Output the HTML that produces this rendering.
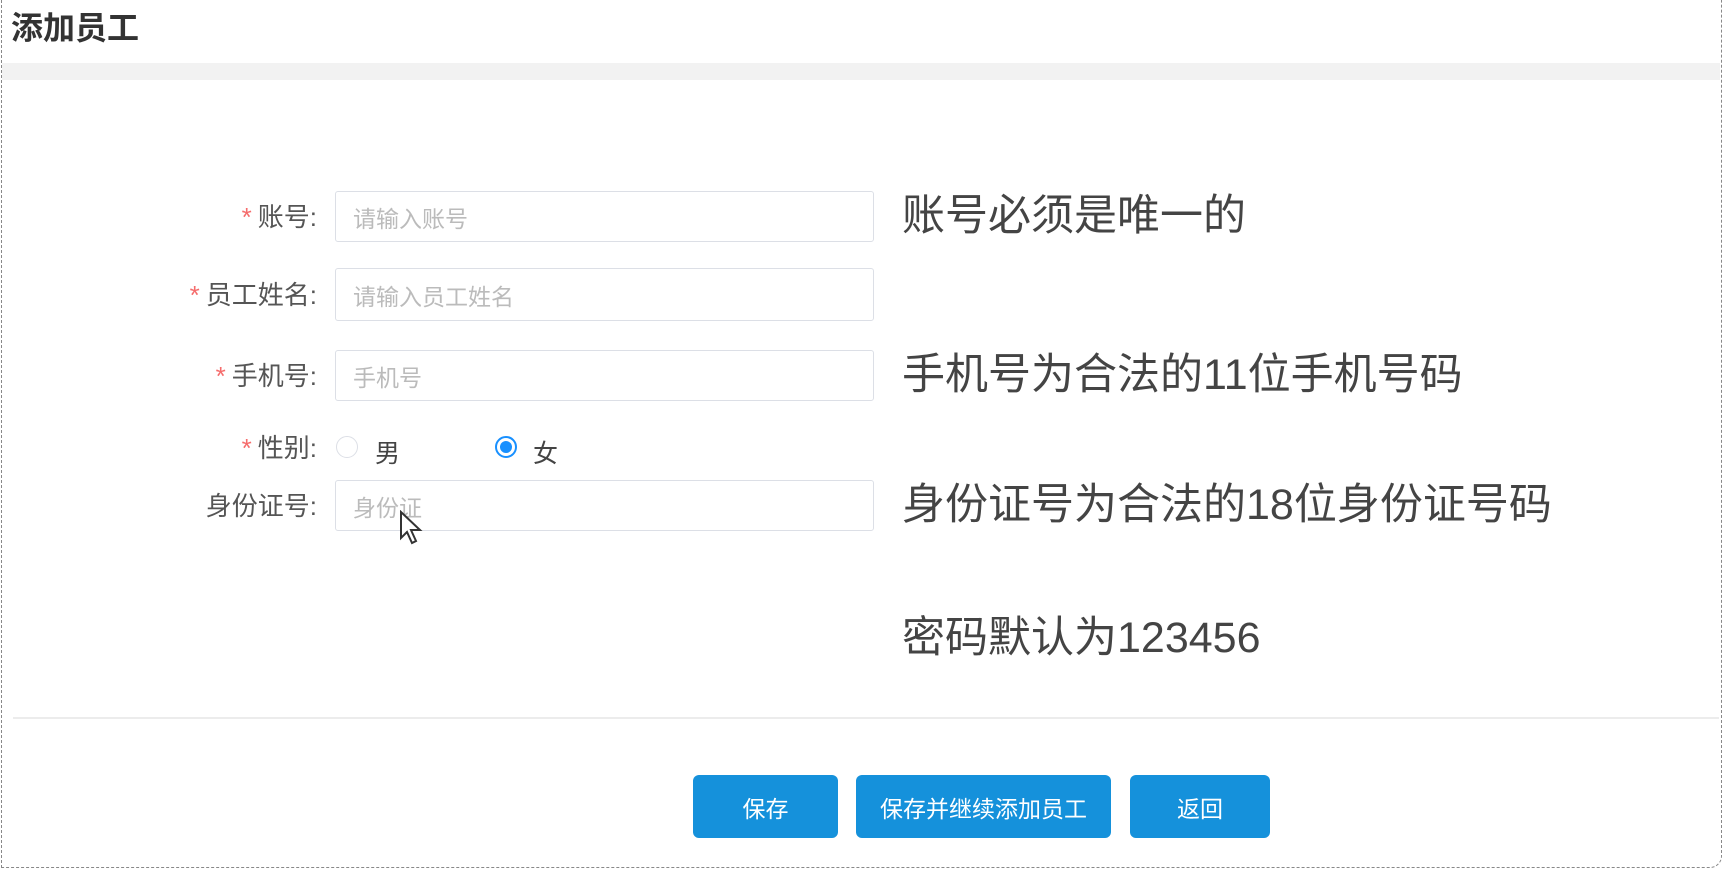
<!DOCTYPE html>
<html><head><meta charset="utf-8"><style>
*{margin:0;padding:0;box-sizing:border-box}
body{width:1724px;height:870px;background:#fff;font-family:"Liberation Sans","Noto Sans CJK SC",sans-serif;position:relative;overflow:hidden}
.frame{position:absolute;left:1px;top:0;width:1721px;height:868px;border:1px dashed #888;border-top:none;border-radius:0 0 12px 0}
.title{position:absolute;left:11px;top:3px;font-size:32px;font-weight:bold;color:#333}
.band{position:absolute;left:2px;right:4px;top:63px;height:17px;background:#f2f2f2}
.lbl{position:absolute;right:1407px;font-size:26px;color:#555;white-space:nowrap;line-height:28px}
.lbl b{color:#f56c6c;font-weight:normal;margin-right:6px}
.inp{position:absolute;left:335px;width:539px;border:1px solid #dcdfe6;border-radius:3px;font-size:23px;color:#bbb;padding-left:17px;display:flex;align-items:center}
.note{position:absolute;left:902px;font-size:43px;color:#444;line-height:48px;white-space:nowrap}
.radio{position:absolute;width:22px;height:22px;border-radius:50%;border:1px solid #dcdfe6;top:436px}
.radio.on{border:2px solid #1890ff;background:#fff}
.radio.on:after{content:"";position:absolute;left:3px;top:3px;width:12px;height:12px;border-radius:50%;background:#1890ff}
.rl{position:absolute;top:434px;font-size:25px;color:#444}
.line{position:absolute;left:13px;right:5px;top:717px;height:2px;background:#ececec}
.btn{position:absolute;top:775px;height:63px;background:#1591db;border-radius:6px;color:#fff;font-size:23px;display:flex;align-items:center;justify-content:center}
</style></head><body>
<div class="frame"></div>
<div class="title">添加员工</div>
<div class="band"></div>

<div class="lbl" style="top:203px"><b>*</b>账号:</div>
<div class="inp" style="top:191px;height:51px">请输入账号</div>
<div class="lbl" style="top:281px"><b>*</b>员工姓名:</div>
<div class="inp" style="top:268px;height:53px">请输入员工姓名</div>
<div class="lbl" style="top:362px"><b>*</b>手机号:</div>
<div class="inp" style="top:350px;height:51px">手机号</div>
<div class="lbl" style="top:434px"><b>*</b>性别:</div>
<div class="radio" style="left:336px"></div><div class="rl" style="left:375px">男</div>
<div class="radio on" style="left:495px"></div><div class="rl" style="left:533px">女</div>
<div class="lbl" style="top:492px">身份证号:</div>
<div class="inp" style="top:480px;height:51px">身份证</div>

<div class="note" style="top:192px">账号必须是唯一的</div>
<div class="note" style="top:351px">手机号为合法的11位手机号码</div>
<div class="note" style="top:481px">身份证号为合法的18位身份证号码</div>
<div class="note" style="top:614px">密码默认为123456</div>

<svg style="position:absolute;left:399px;top:510px" width="26" height="36" viewBox="0 0 13 18"><path d="M1 1 L1 14 L4 11 L6.5 16.5 L8.5 15.5 L6 10 L10.5 10 Z" fill="#fff" stroke="#333" stroke-width="1"/></svg>

<div class="line"></div>
<div class="btn" style="left:693px;width:145px">保存</div>
<div class="btn" style="left:856px;width:255px">保存并继续添加员工</div>
<div class="btn" style="left:1130px;width:140px">返回</div>
</body></html>
